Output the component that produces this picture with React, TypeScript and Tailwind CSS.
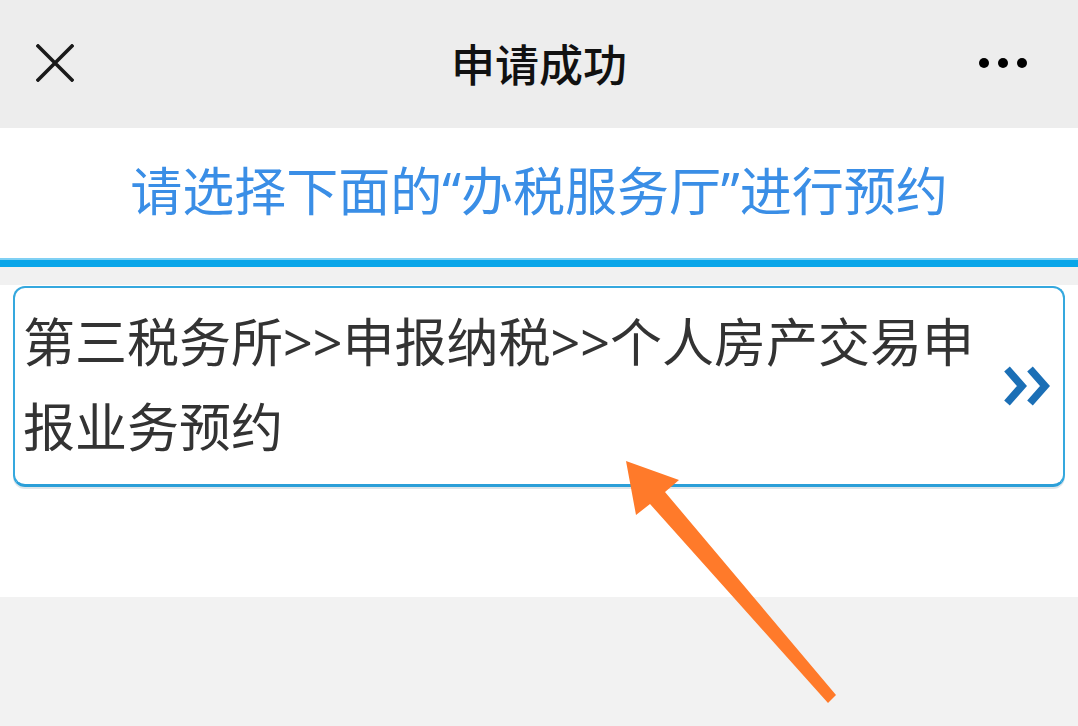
import React from 'react';

const FONT = { fontFamily: '"Noto Sans CJK SC", "Noto Sans", sans-serif' };
const MIXED = { fontFamily: '"Noto Sans", "Noto Sans CJK SC", sans-serif' };

function CloseIcon() {
  return (
    <svg width="38" height="38" viewBox="0 0 38 38" className="block">
      <path d="M2 2 L36 36 M36 2 L2 36" stroke="#1a1a1a" strokeWidth="3.6" strokeLinecap="square" fill="none" />
    </svg>
  );
}

function MoreIcon() {
  return (
    <svg width="50" height="12" viewBox="0 0 50 12" className="block">
      <circle cx="6" cy="6" r="5" fill="#000" />
      <circle cx="25" cy="6" r="5" fill="#000" />
      <circle cx="44" cy="6" r="5" fill="#000" />
    </svg>
  );
}

function DoubleChevron() {
  return (
    <svg width="48" height="42" viewBox="0 0 48 42" className="block">
      <g stroke="#1b6fb6" strokeWidth="7.5" fill="none" strokeLinejoin="miter" strokeLinecap="butt">
        <polyline points="4,4 19,21 4,38" />
        <polyline points="27,4 42,21 27,38" />
      </g>
    </svg>
  );
}

function Arrow() {
  return (
    <svg
      className="absolute left-0 top-0 pointer-events-none"
      width="1078"
      height="726"
      viewBox="0 0 1078 726"
    >
      <polygon
        points="626,461 679,480 665,492 836,695 828,703 650,504 636,515"
        fill="#ff7a2a"
      />
    </svg>
  );
}

export default function App() {
  return (
    <div className="relative w-[1078px] h-[726px] bg-[#f2f2f2] flex flex-col overflow-hidden" style={FONT}>
      {/* Top bar */}
      <div className="h-[128px] bg-[#ededed] flex items-center justify-between shrink-0">
        <div className="w-[160px] pl-[36px] pb-[2px]">
          <CloseIcon />
        </div>
        <div className="text-[44px] leading-none font-medium text-[#111] pb-[2px]">申请成功</div>
        <div className="w-[160px] flex justify-end pr-[50px] pb-[2px]">
          <MoreIcon />
        </div>
      </div>

      {/* Heading */}
      <div className="h-[130px] bg-white flex items-center justify-center shrink-0">
        <div className="text-[52px] leading-none text-[#3a8ee6] pb-[4px]" style={MIXED}>
          请选择下面的“办税服务厅”进行预约
        </div>
      </div>
      <div className="h-[2px] bg-[#7fd0f4] shrink-0" />
      <div className="h-[7px] bg-[#0aa6e9] shrink-0" />
      <div className="h-[18px] bg-[#f1f1f1] shrink-0" />

      {/* List */}
      <div className="h-[312px] bg-white px-[13px] pt-[1px] shrink-0">
        <div className="h-[201px] rounded-[12px] border-2 border-[#35a8de] border-b-[3px] border-b-[#2b9fd8] shadow-[0_2px_0_#dfe6ea] flex items-center">
          <div className="flex-1 pl-[8px] pr-[6px] text-[52px] leading-[85px] text-[#333] pb-[4px]" style={MIXED}>
            第三税务所&gt;&gt;申报纳税&gt;&gt;个人房产交易申报业务预约
          </div>
          <div className="w-[48px] mr-[12px] shrink-0">
            <DoubleChevron />
          </div>
        </div>
      </div>

      <div className="flex-1 bg-[#f2f2f2]" />

      <Arrow />
    </div>
  );
}
